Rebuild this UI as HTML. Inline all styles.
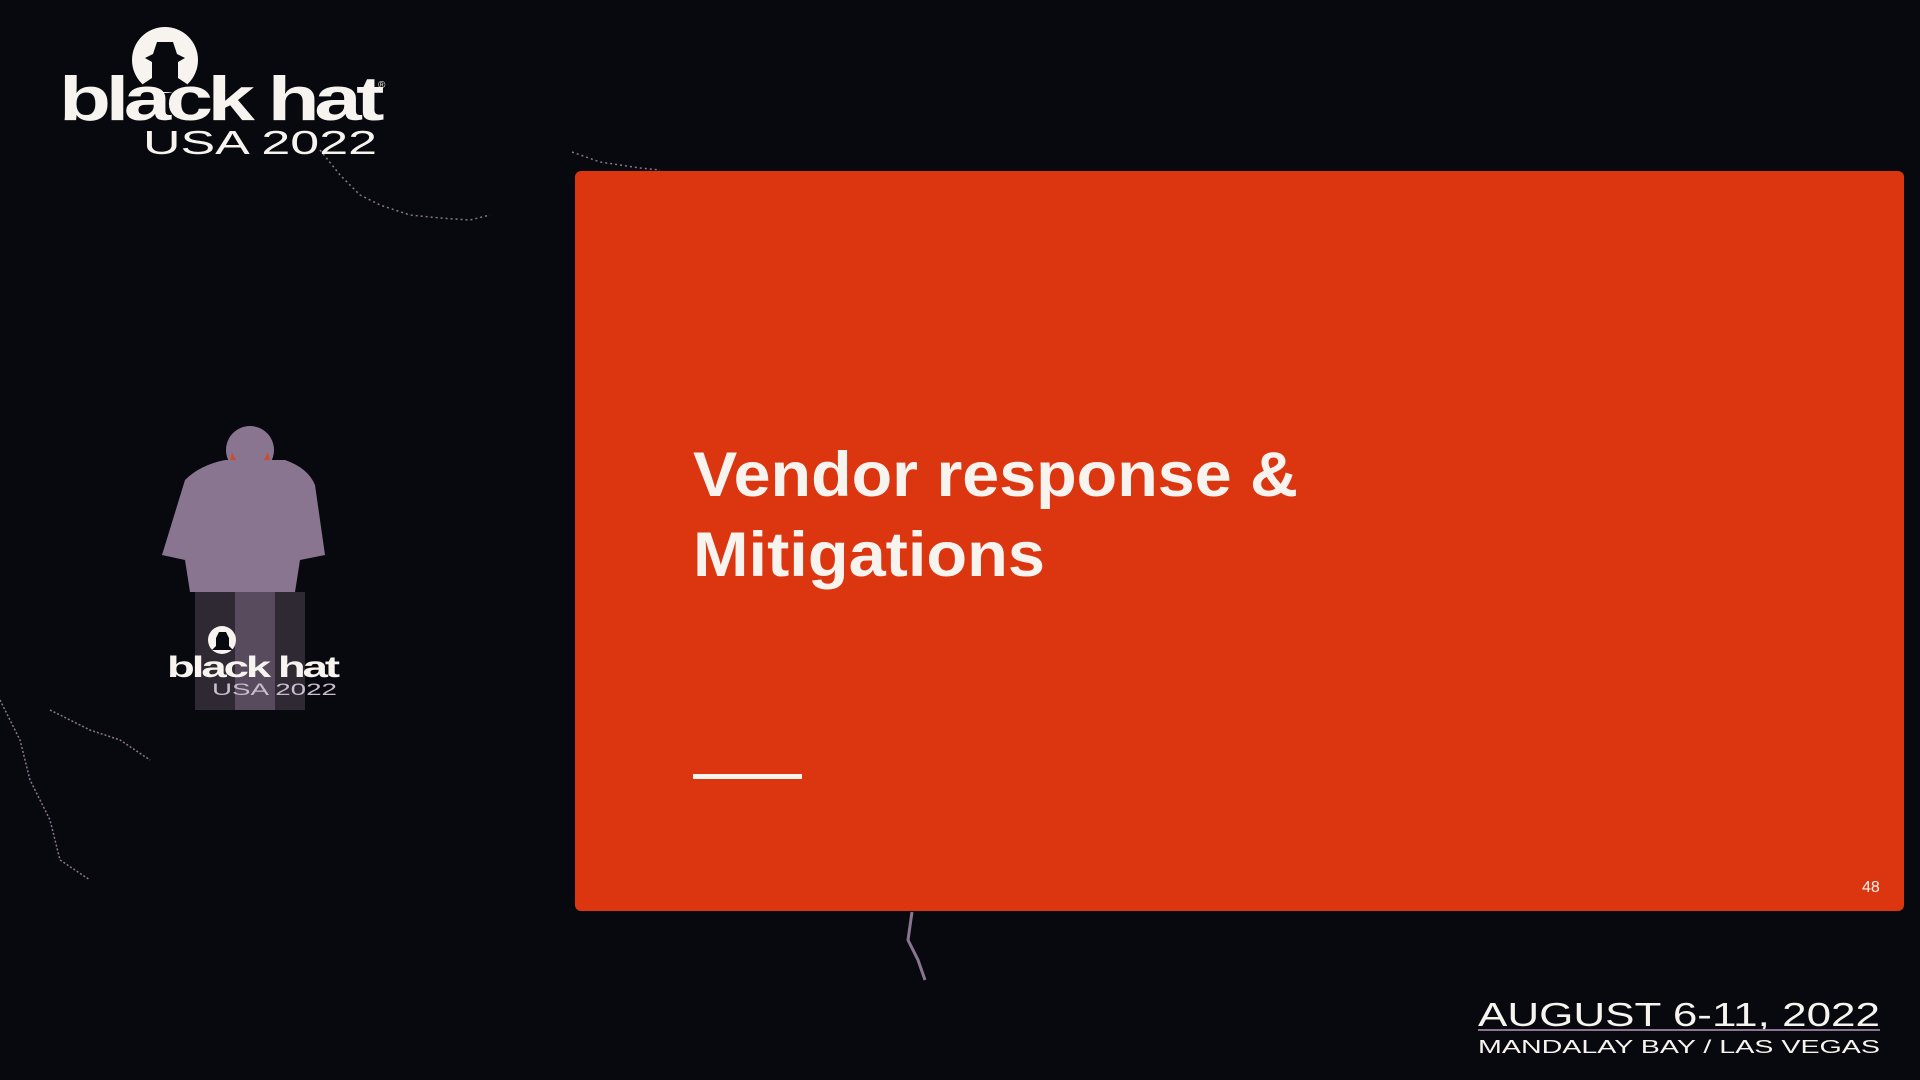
<!DOCTYPE html>
<html><head><meta charset="utf-8"><style>
html,body{margin:0;padding:0;background:#08090e;width:1920px;height:1080px;overflow:hidden;font-family:"Liberation Sans",sans-serif}
.abs{position:absolute}
</style></head><body>
<svg class="abs" style="left:0;top:0" width="1920" height="1080">
 <polyline points="572,152 600,162 640,168 660,170" fill="none" stroke="#8a7590" stroke-width="1.5" stroke-dasharray="2 3"/>
 <polyline points="320,150 340,175 360,195 380,205 410,215 440,218 470,220 490,215" fill="none" stroke="#8a7590" stroke-width="1.5" stroke-dasharray="2 3"/>
 <polyline points="0,700 20,740 30,780 50,820 60,860 90,880" fill="none" stroke="#8a7590" stroke-width="1.5" stroke-dasharray="2 2"/>
 <polyline points="50,710 90,730 120,740 150,760" fill="none" stroke="#8a7590" stroke-width="1.5" stroke-dasharray="2 2"/>
 <polyline points="912,912 908,940 918,960 925,980" fill="none" stroke="#8a7590" stroke-width="3"/>
 <!-- logo -->
 <circle cx="165" cy="60" r="33" fill="#f7f3ee"/>
 <path d="M143,84 L152,78 L152,62 L145,58 L153,54 L157,42 L173,42 L177,54 L185,58 L178,62 L178,78 L187,84 L187,92 L143,92Z" fill="#08090e"/>
 <text x="59" y="120" font-family="Liberation Sans" font-weight="bold" font-size="62" fill="#f7f3ee" textLength="320" lengthAdjust="spacingAndGlyphs" letter-spacing="-4">black hat</text>
 <text x="378" y="88" font-size="10" fill="#f7f3ee">®</text>
 <text x="143" y="154" font-family="Liberation Sans" font-size="33" fill="#f7f3ee" textLength="234" lengthAdjust="spacingAndGlyphs">USA 2022</text>
 <!-- speaker -->
 <circle cx="250" cy="450" r="24" fill="#8a7590"/>
 <path d="M232,452 Q250,490 268,452 L272,470 Q250,500 228,470Z" fill="#d8441a" opacity=".8"/>
 <path d="M162,555 L185,480 Q200,465 225,460 L285,460 Q308,468 315,485 L325,555 L300,560 L295,592 L190,592 L185,560Z" fill="#8a7590"/>
 <rect x="195" y="592" width="110" height="118" fill="#8a7590" opacity=".3"/>
 <rect x="235" y="592" width="40" height="118" fill="#8a7590" opacity=".45"/>
 <circle cx="222" cy="640" r="14" fill="#f7f3ee"/>
 <path d="M212,650 L216,646 L216,638 L219,632 L226,632 L229,638 L229,646 L233,650Z" fill="#08090e"/>
 <text x="167" y="677" font-weight="bold" font-size="30" fill="#f7f3ee" textLength="170" lengthAdjust="spacingAndGlyphs" letter-spacing="-2">black hat</text>
 <text x="212" y="695" font-size="17" fill="#c9bccd" textLength="125" lengthAdjust="spacingAndGlyphs">USA 2022</text>
 <!-- bottom right -->
 <text x="1478" y="1026" font-size="33" fill="#f7f3ee" textLength="402" lengthAdjust="spacingAndGlyphs">AUGUST 6-11, 2022</text>
 <rect x="1478" y="1029" width="402" height="2" fill="#8a7590"/>
 <text x="1478" y="1053" font-size="18" fill="#f7f3ee" textLength="402" lengthAdjust="spacingAndGlyphs">MANDALAY BAY / LAS VEGAS</text>
</svg>
<div class="abs" style="left:575px;top:171px;width:1329px;height:740px;background:#dc3611;border-radius:6px"></div>
<svg class="abs" style="left:0;top:0" width="1920" height="1080">
 <text x="693" y="496" font-weight="bold" font-size="63" fill="#f7f3ee" textLength="605" lengthAdjust="spacingAndGlyphs">Vendor response &amp;</text>
 <text x="693" y="576" font-weight="bold" font-size="63" fill="#f7f3ee" textLength="352" lengthAdjust="spacingAndGlyphs">Mitigations</text>
</svg>
<div class="abs" style="left:693px;top:774px;width:109px;height:5px;background:#f7f3ee"></div>
<div class="abs" style="left:1862px;top:879px;color:#f7f3ee;font-size:16px">48</div>
</body></html>
